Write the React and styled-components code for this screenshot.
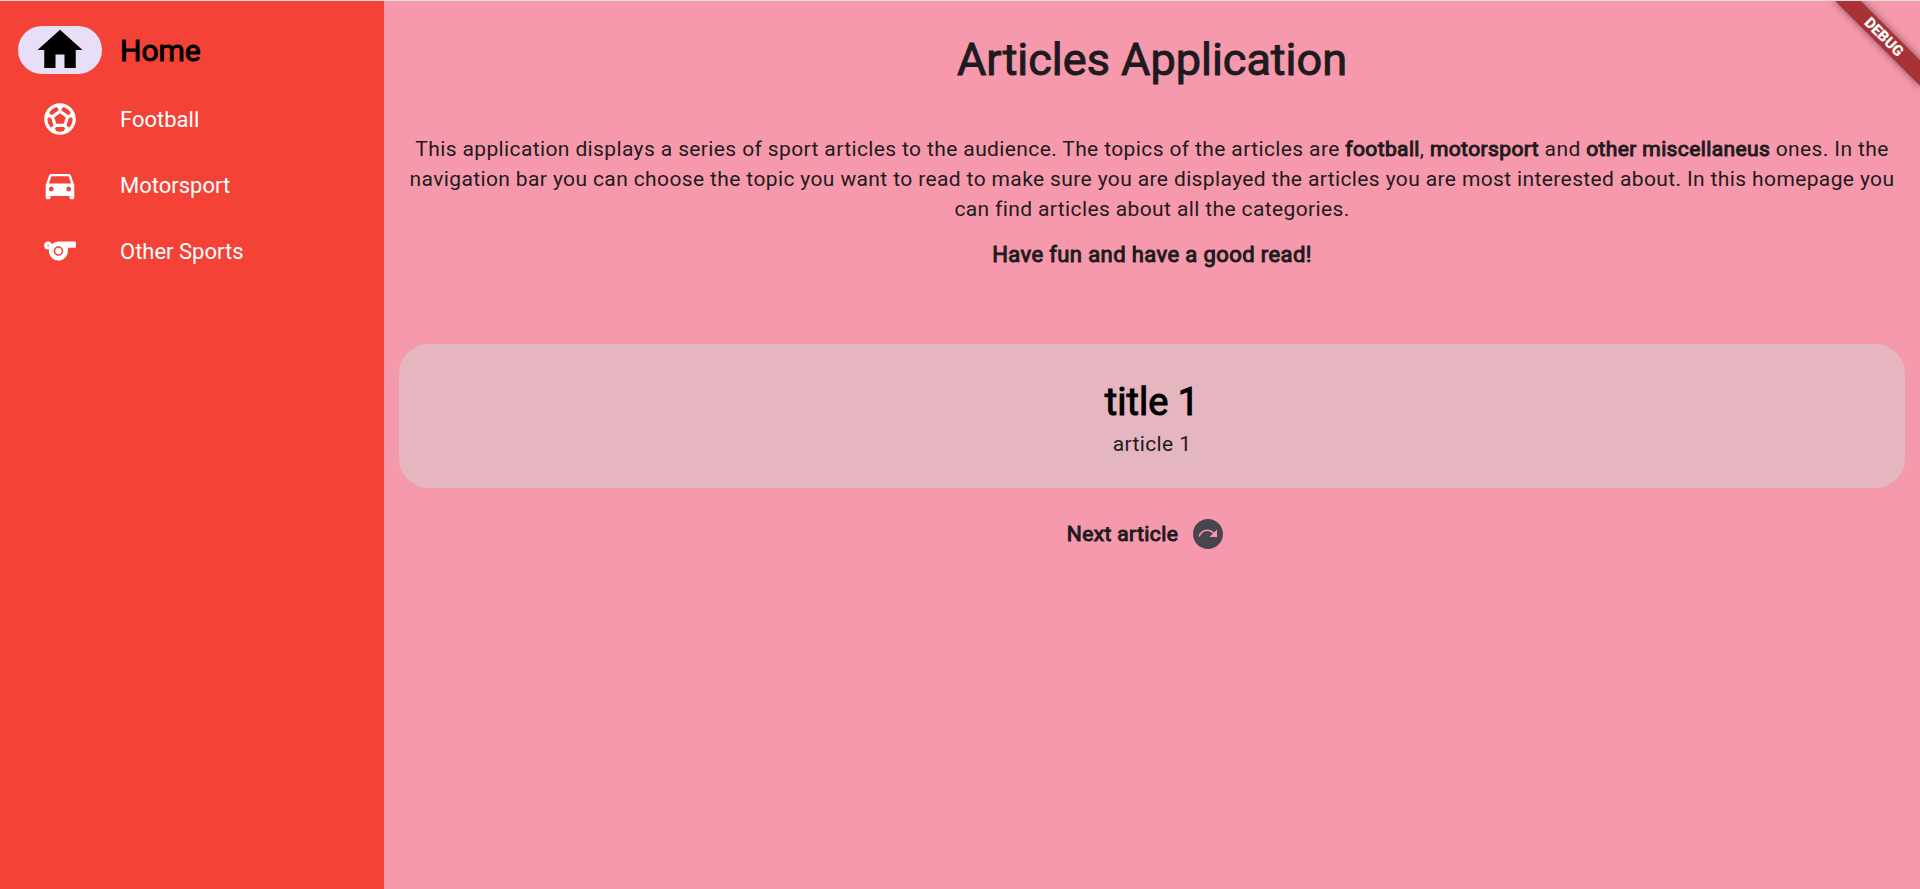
import React, { useState } from "react";
import styled, { createGlobalStyle } from "styled-components";
import {
  MdHome,
  MdOutlineSportsSoccer,
  MdDirectionsCar,
  MdSports,
  MdNextPlan,
} from "react-icons/md";

const GlobalStyle = createGlobalStyle`
  *, *::before, *::after {
    box-sizing: border-box;
  }
  body {
    margin: 0;
    background: #f799ac;
    color: #1d1b20;
    font-family: Roboto, "Liberation Sans", sans-serif;
  }
`;

const Page = styled.div`
  position: relative;
  display: flex;
  min-height: 100vh;
  border-top: 1px solid #dedede;
`;

const Rail = styled.nav`
  flex: 0 0 20%;
  min-width: 256px;
  padding: 13px 18px;
  background: #f44336;
`;

const RailList = styled.ul`
  display: flex;
  flex-direction: column;
  margin: 0;
  padding: 0;
  list-style: none;
`;

const RailLink = styled.a`
  display: flex;
  align-items: center;
  gap: 18px;
  height: ${(p) => (p.$selected ? "72px" : "66px")};
  color: ${(p) => (p.$selected ? "#000" : "#fff")};
  font-size: ${(p) => (p.$selected ? "30px" : "22px")};
  line-height: 36px;
  text-decoration: none;
  -webkit-text-stroke: ${(p) => (p.$selected ? "1px" : "0")};
`;

const RailLabel = styled.span`
  padding-top: 2px;
`;

const Indicator = styled.span`
  display: flex;
  align-items: center;
  justify-content: center;
  flex: none;
  width: 84px;
  height: 48px;
  border-radius: 24px;
  background: ${(p) => (p.$selected ? "#e8def8" : "transparent")};
  font-size: ${(p) => (p.$selected ? "54px" : "38px")};
  -webkit-text-stroke: 0;
`;

const Main = styled.main`
  flex: 1;
  min-width: 0;
  padding: 30px 15px;
  text-align: center;
`;

const PageTitle = styled.h1`
  margin: 0 0 45px;
  font-size: 45px;
  font-weight: 400;
  line-height: 58px;
  -webkit-text-stroke: 1px;
`;

const Intro = styled.p`
  margin: 0;
  font-size: 21px;
  line-height: 30px;
  letter-spacing: 0.018em;
`;

const Strong = styled.strong`
  font-weight: 400;
  -webkit-text-stroke: 1px;
`;

const Wish = styled.p`
  margin: 16px 0 74px;
  font-size: 22px;
  line-height: 30px;
  letter-spacing: 0.018em;
  -webkit-text-stroke: 1px;
`;

const Card = styled.article`
  padding: 36px 30px 29px;
  border-radius: 30px;
  background: #e5b6c0;
`;

const CardTitle = styled.h2`
  margin: 0 0 5px;
  color: #000;
  font-size: 38px;
  font-weight: 400;
  line-height: 44px;
  -webkit-text-stroke: 1px;
`;

const NextRow = styled.div`
  display: flex;
  align-items: center;
  justify-content: center;
  padding-top: 16px;
`;

const NextButton = styled.button`
  display: flex;
  align-items: center;
  gap: 12px;
  margin: 0;
  padding: 12px 26px 12px 15px;
  border: 0;
  background: none;
  color: #1d1b20;
  font: 400 21px/36px Roboto, "Liberation Sans", sans-serif;
  letter-spacing: 0.018em;
  cursor: pointer;
`;

const NextLabel = styled.span`
  -webkit-text-stroke: 1px;
`;

const NextIcon = styled(MdNextPlan)`
  color: #49454f;
  font-size: 36px;
`;

const BannerCorner = styled.div`
  position: absolute;
  top: 0;
  right: 0;
  width: 120px;
  height: 120px;
  overflow: hidden;
  pointer-events: none;
`;

const Banner = styled.div`
  position: absolute;
  top: 27px;
  right: -24px;
  width: 120px;
  height: 18px;
  background: #a93237;
  box-shadow: 0 0 9px rgba(0, 0, 0, 0.5);
  color: #fff;
  font-size: 15px;
  font-weight: 900;
  line-height: 18px;
  text-align: center;
  transform: rotate(45deg);
`;

const destinations = [
  { label: "Home", Icon: MdHome },
  { label: "Football", Icon: MdOutlineSportsSoccer },
  { label: "Motorsport", Icon: MdDirectionsCar },
  { label: "Other Sports", Icon: MdSports },
];

export default function App() {
  const [selected, setSelected] = useState("Home");
  const [article, setArticle] = useState(1);

  return (
    <>
      <GlobalStyle />
      <Page>
        <Rail>
          <RailList>
            {destinations.map(({ label, Icon }) => {
              const active = label === selected;
              return (
                <li key={label}>
                  <RailLink
                    href="#"
                    $selected={active}
                    aria-current={active ? "page" : undefined}
                    onClick={(e) => {
                      e.preventDefault();
                      setSelected(label);
                    }}
                  >
                    <Indicator $selected={active}>
                      <Icon aria-hidden="true" />
                    </Indicator>
                    <RailLabel>{label}</RailLabel>
                  </RailLink>
                </li>
              );
            })}
          </RailList>
        </Rail>
        <Main>
          <PageTitle>Articles Application</PageTitle>
          <Intro>
            This application displays a series of sport articles to the audience. The topics of
            the articles are <Strong>football</Strong>, <Strong>motorsport</Strong> and{" "}
            <Strong>other miscellaneus</Strong> ones. In the navigation bar you can choose the
            topic you want to read to make sure you are displayed the articles you are most
            interested about. In this homepage you can find articles about all the categories.
          </Intro>
          <Wish>Have fun and have a good read!</Wish>
          <Card>
            <CardTitle>title {article}</CardTitle>
            <Intro>article {article}</Intro>
          </Card>
          <NextRow>
            <NextButton type="button" onClick={() => setArticle(article + 1)}>
              <NextLabel>Next article</NextLabel>
              <NextIcon aria-hidden="true" />
            </NextButton>
          </NextRow>
        </Main>
        <BannerCorner>
          <Banner>DEBUG</Banner>
        </BannerCorner>
      </Page>
    </>
  );
}
